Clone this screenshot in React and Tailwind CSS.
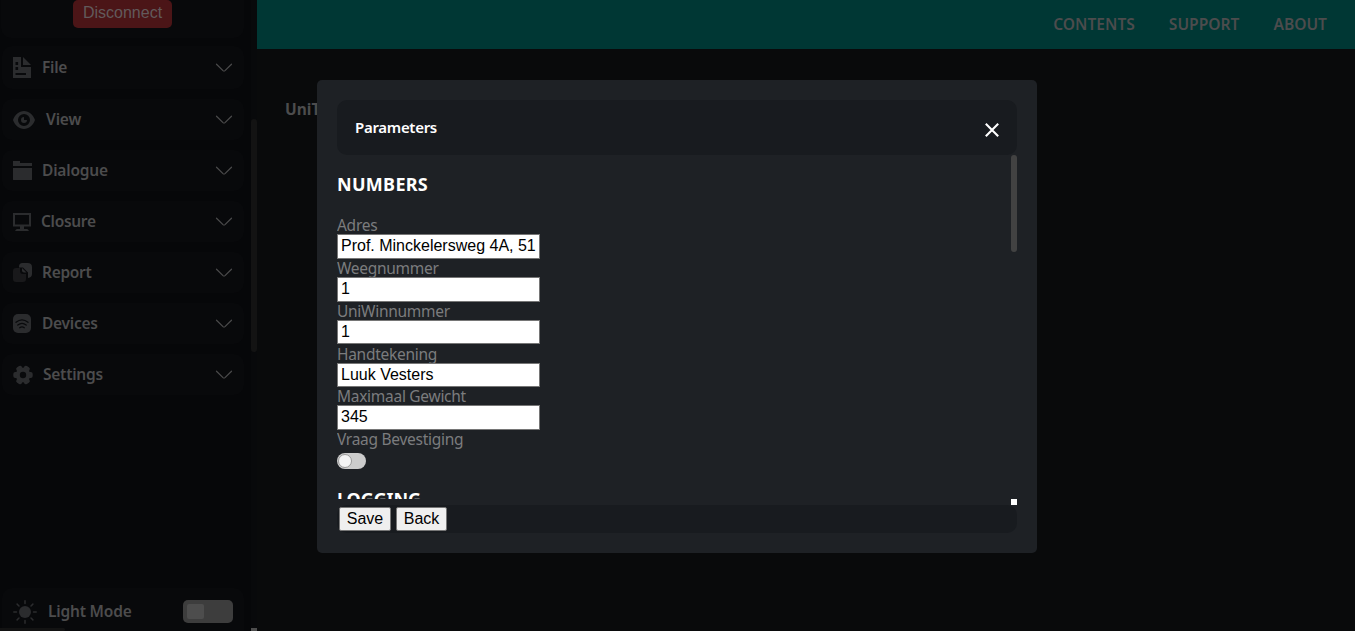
import React from "react";

const ink = "#2b2c2e";

const FileIcon = () => (
  <svg width="18" height="21" viewBox="0 0 18 21" fill={ink} className="block">
    <path fillRule="evenodd" d="M0 0h8v10h10v11H0zM2.500 5v3h2.600V5zM2.500 10v3h2.600v-3zM2.500 16v2H13v-2z" />
    <path d="M10 0l8 8h-8z" />
  </svg>
);
const EyeIcon = () => (
  <svg width="22" height="18" viewBox="0 0 22 18" fill={ink} className="block">
    <path fillRule="evenodd" d="M11 0C6 0 2 3.600 0 9c2 5.400 6 9 11 9s9-3.600 11-9C20 3.600 16 0 11 0zM11 3a6 6 0 1 1 0 12a6 6 0 0 1 0-12z" />
    <path d="M11 6a3 3 0 1 0 3 3h-3z" />
  </svg>
);
const FolderIcon = () => (
  <svg width="19" height="19" viewBox="0 0 19 19" fill={ink} className="block">
    <path d="M0 0h7v2h12v3H0zM0 7h19v11.500q0 .5-.5.500H.5q-.5 0-.5-.5z" />
  </svg>
);
const MonitorIcon = () => (
  <svg width="18" height="18" viewBox="0 0 18 18" fill={ink} className="block">
    <path fillRule="evenodd" d="M0 0h18v13.500h-7V16h3q1 0 2 2H2q1-2 2-2h3v-2.500H0zM2 2v9.500h14V2z" />
  </svg>
);
const ReportIcon = () => (
  <svg width="19" height="19" viewBox="0 0 19 19" className="block">
    <path d="M6 3.500Q6 0 9.500 0h5Q19 0 19 4v7q0 3.500-4 4V9.500L10 4.500H6z" fill={ink} />
    <path d="M0 8q0-3 3-3h4v3q0 3 3 3h3v5q0 3-3 3H3q-3 0-3-3z" fill="#19191b" />
    <path d="M9 5l4.500 4.500H11Q9 9.500 9 7.500z" fill={ink} />
  </svg>
);
const DevicesIcon = () => (
  <svg width="18" height="19" viewBox="0 0 18 19" className="block">
    <rect width="18" height="19" rx="5" fill={ink} />
    <path d="M3 8.300q6-5 12 0M4.800 11q4.200-3.400 8.400 0M6.700 13.700q2.300-1.600 4.600 0" fill="none" stroke="#090a0c" strokeWidth="1.300" strokeLinecap="round" />
  </svg>
);
const GearIcon = () => (
  <svg width="20" height="20" viewBox="0 0 20 20" className="block">
    <g fill={ink}>
      <rect x="6.900" y="0.300" width="6.200" height="19.400" rx="2" transform="rotate(30 10 10)" />
      <rect x="6.900" y="0.300" width="6.200" height="19.400" rx="2" transform="rotate(90 10 10)" />
      <rect x="6.900" y="0.300" width="6.200" height="19.400" rx="2" transform="rotate(150 10 10)" />
      <circle cx="10" cy="10" r="7.300" />
    </g>
    <circle cx="10" cy="10" r="3.200" fill="#090a0c" />
  </svg>
);
const SunIcon = () => (
  <svg width="24" height="24" viewBox="0 0 24 24" className="block">
    <circle cx="12" cy="12" r="6" fill={ink} />
    <path d="M12 .8v2.700M12 20.500v2.700M.8 12h2.700M20.500 12h2.700M4.100 4.100L6 6M18 18l1.900 1.900M19.900 4.100L18 6M6 18l-1.900 1.900" stroke={ink} strokeWidth="1.500" strokeLinecap="round" />
  </svg>
);
const Chevron = () => (
  <svg width="18" height="10" viewBox="0 0 18 10" className="block" fill="none" stroke="#4b4b4c" strokeWidth="1.200" strokeLinecap="round" strokeLinejoin="round">
    <path d="M1.500 1.200L8 7.600q1 .8 2 0L16.500 1.200" />
  </svg>
);

const items = [
  { label: "File", Icon: FileIcon, box: "h-[43px] mb-[10px]", gap: "ml-[11px]", text: "tracking-[-0.3px]" },
  { label: "View", Icon: EyeIcon, box: "h-[41px] mb-[10px]", gap: "ml-[11px]", text: "tracking-[-0.15px]" },
  { label: "Dialogue", Icon: FolderIcon, box: "h-[41px] mb-[10px]", gap: "ml-[10px]", text: "tracking-[-0.2px]" },
  { label: "Closure", Icon: MonitorIcon, box: "h-[41px] mb-[10px]", gap: "ml-[10px]", text: "tracking-[-0.3px]" },
  { label: "Report", Icon: ReportIcon, box: "h-[41px] mb-[10px]", gap: "ml-[10px]", text: "tracking-[-0.3px]" },
  { label: "Devices", Icon: DevicesIcon, box: "h-[41px] mb-[10px]", gap: "ml-[11px]", text: "tracking-[-0.25px]" },
  { label: "Settings", Icon: GearIcon, box: "h-[41px]", gap: "ml-[10px]", text: "tracking-[-0.25px]" },
];

const fields = [
  { label: "Adres", value: "Prof. Minckelersweg 4A, 51", h: "h-[43px]", size: "h-[25px]" },
  { label: "Weegnummer", value: "1", h: "h-[43px]", size: "h-[25px]" },
  { label: "UniWinnummer", value: "1", h: "h-[43px]", size: "h-[24px]" },
  { label: "Handtekening", value: "Luuk Vesters", h: "h-[42px]", size: "h-[24px]" },
  { label: "Maximaal Gewicht", value: "345", h: "h-[43px]", size: "h-[25px]" },
];

function Sidebar() {
  return (
    <aside className="flex h-full w-[257px] shrink-0 bg-[#060709]">
      <div className="flex w-[251px] flex-col">
        <div className="mb-[8px] ml-px flex h-[38px] w-[243px] shrink-0 justify-center rounded-b-[10px] bg-[#08090b]">
          <button className="h-[28px] w-[99px] rounded-[5px] bg-[#4b1517] pb-[2px] font-['Liberation_Sans',sans-serif] text-base leading-[26px] text-[#625a5b]">
            Disconnect
          </button>
        </div>
        {items.map(({ label, Icon, box, gap, text }) => (
          <div key={label} className={`ml-[2px] flex w-[242px] shrink-0 items-center rounded-[10px] bg-[#08090b] pr-[11px] pl-[11px] ${box}`}>
            <Icon />
            <span className={`${gap} ${text} flex-1 pb-[2px] text-[15.5px] font-semibold leading-6 text-[#4c4c4d]`}>{label}</span>
            <Chevron />
          </div>
        ))}
        <div className="mt-auto ml-[2px] flex h-[43px] w-[242px] items-center rounded-t-[10px] bg-[#08090b] pt-[4px] pr-[11px] pl-[11px]">
          <SunIcon />
          <span className="ml-[11px] flex-1 pb-[2px] text-[15.5px] font-semibold leading-6 tracking-[-0.2px] text-[#4c4c4d]">Light Mode</span>
          <span className="flex h-[23px] w-[50px] items-center rounded-[5px] bg-[#3d3d3d] pl-[4px]">
            <span className="h-[15px] w-[17px] rounded-[2px] bg-[#4d4d4d]" />
          </span>
        </div>
        <div className="-mt-[3px] h-[3px] w-[65px] rounded-r-[3px] bg-[#131313]" />
      </div>
      <div className="flex w-[6px] flex-col bg-[#08090b] pt-[119px]">
        <div className="h-[233px] rounded-[3px] bg-[#131313]" />
        <div className="mt-auto h-[3px] bg-[#4d4d4d]" />
      </div>
    </aside>
  );
}

function Modal() {
  return (
    <section className="absolute left-[317px] top-[80px] flex h-[473px] w-[720px] flex-col rounded-[5px] bg-[#1e2125] p-[20px]">
      <header className="flex h-[55px] shrink-0 items-center justify-between rounded-[10px] bg-[#181b1f] pr-[18px] pl-[18px]">
        <h2 className="pb-[2px] text-[15px] font-semibold leading-6 tracking-[-0.3px] text-white">Parameters</h2>
        <svg width="14" height="14" viewBox="0 0 14 14" className="mt-[5px] block" stroke="#fff" strokeWidth="2.100">
          <path d="M.8.8l12.400 12.400M13.200.8L.8 13.200" />
        </svg>
      </header>
      <div className="flex h-[350px] shrink-0">
        <div className="h-[344px] w-[674px] overflow-hidden">
          <h3 className="mt-[16px] mb-[18px] h-[26px] text-[18px] font-bold leading-[26px] tracking-[0.3px] text-white">NUMBERS</h3>
          {fields.map(({ label, value, h, size }) => (
            <div key={label} className={`flex flex-col ${h}`}>
              <label className="h-[18px] text-[15.5px] leading-[20px] tracking-[-0.28px] text-[#7b7c7e]">{label}</label>
              <input
                defaultValue={value}
                className={`mt-px w-[203px] shrink-0 border border-[#767676] bg-white px-[3px] pb-px font-['Liberation_Sans',sans-serif] text-base text-black outline-none ${size}`}
              />
            </div>
          ))}
          <div className="h-[22px] text-[15.5px] leading-[20px] tracking-[-0.28px] text-[#7b7c7e]">Vraag Bevestiging</div>
          <div className="mt-[2px] flex h-[16px] w-[29px] items-center rounded-full bg-[#ccc] pl-px">
            <span className="h-[14px] w-[14px] rounded-full border border-[#999] bg-[#f4f4f4]" />
          </div>
          <h3 className="mt-[17px] text-[18px] font-bold leading-[26px] tracking-[-0.1px] text-white">LOGGING</h3>
        </div>
        <div className="flex w-[6px] flex-col">
          <div className="h-[97px] rounded-[3px] bg-[#424242]" />
          <div className="mt-auto h-[6px] bg-white" />
        </div>
      </div>
      <footer className="flex h-[28px] shrink-0 gap-[5px] rounded-[10px] bg-[#181b1f] pt-[2px] pl-[2px] font-['Liberation_Sans',sans-serif] text-base text-black">
        <button className="h-[24px] w-[52px] rounded-[2px] border border-[#767676] bg-[#efefef] leading-[22px]">Save</button>
        <button className="h-[24px] w-[51px] rounded-[2px] border border-[#767676] bg-[#efefef] leading-[22px]">Back</button>
      </footer>
    </section>
  );
}

export default function App() {
  return (
    <div className="relative flex h-[631px] w-[1355px] overflow-hidden bg-[#090a0b] font-['Noto_Sans',sans-serif]">
      <Sidebar />
      <main className="flex flex-1 flex-col">
        <nav className="flex h-[49px] items-center justify-end gap-[34px] bg-[#003734] pr-[28px] pb-[2px] text-[15.6px] font-semibold leading-6 text-[#4c4c4d]">
          <a>CONTENTS</a>
          <a>SUPPORT</a>
          <a>ABOUT</a>
        </nav>
        <h1 className="mt-[48px] ml-[28px] text-[15.5px] font-bold leading-6 text-[#4c4c4d]">UniTerm</h1>
      </main>
      <Modal />
    </div>
  );
}
